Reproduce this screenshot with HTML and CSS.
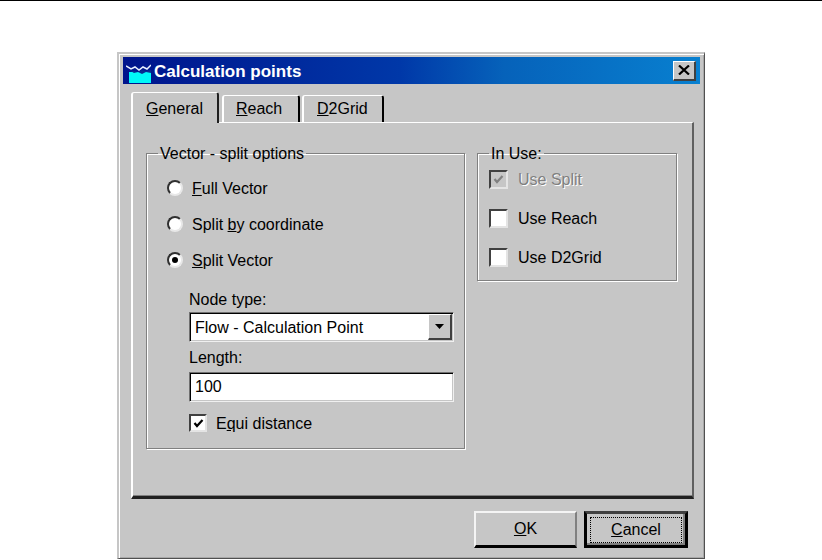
FILE: index.html
```html
<!DOCTYPE html>
<html lang="en">
<head>
<meta charset="utf-8">
<title>Calculation points</title>
<link rel="stylesheet" href="styles.css">
</head>
<body>
<div class="page-rule"></div>
<div class="dialog">
  <div class="titlebar">
    <svg class="app-icon" width="25" height="19" viewBox="0 0 25 19"><rect x="3" y="8" width="22" height="11" fill="#00f8f8"/><path d="M3 6l5 3 4-1 4 2 4-2 5 1v-3l-5 1-4-1-4 2-4-1z" fill="#0a2a90"/><path d="M0 2l5 3 4-2 4 3 4-3 4 2 4-4" fill="none" stroke="#e8f0ff" stroke-width="1.500"/></svg>
    <span class="title-text">Calculation points</span>
    <span class="close-btn"><svg width="12" height="10" viewBox="0 0 12 10"><path d="M1 0.500l10 9M11 0.500l-10 9" stroke="#000" stroke-width="2.200" fill="none"/></svg></span>
  </div>
  <div class="tabs">
    <div class="tab active"><span><u>G</u>eneral</span></div>
    <div class="tab reach"><span><u>R</u>each</span></div>
    <div class="tab grid"><span><u>D</u>2Grid</span></div>
  </div>
  <div class="pane">
    <fieldset class="group vector">
      <legend><span>Vector - split options</span></legend>
      <div class="radio-row"><span class="radio"></span><span class="label"><u>F</u>ull Vector</span></div>
      <div class="radio-row"><span class="radio"></span><span class="label">Split <u>b</u>y coordinate</span></div>
      <div class="radio-row"><span class="radio on"></span><span class="label"><u>S</u>plit Vector</span></div>
      <div class="sub">
        <div class="field-label">Node type:</div>
        <div class="input combo"><span class="val label">Flow - Calculation Point</span><span class="drop"><svg width="9" height="5" viewBox="0 0 9 5"><path d="M0 0h9L4.500 5z" fill="#000"/></svg></span></div>
        <div class="field-label second">Length:</div>
        <div class="input"><span class="val">100</span></div>
        <div class="check-row equi"><span class="check"><svg width="11" height="11" viewBox="0 0 11 11"><path d="M1.500 5l2.500 3 5.500-6" fill="none" stroke="#000" stroke-width="2.200"/></svg></span><span class="label">E<u>q</u>ui distance</span></div>
      </div>
    </fieldset>
    <fieldset class="group inuse">
      <legend><span>In Use:</span></legend>
      <div class="check-row disabled"><span class="check"><svg width="11" height="11" viewBox="0 0 11 11"><path d="M1.500 5l2.500 3 5.500-6" fill="none" stroke="#808080" stroke-width="2.200"/></svg></span><span>Use Split</span></div>
      <div class="check-row"><span class="check"></span><span>Use Reach</span></div>
      <div class="check-row"><span class="check"></span><span>Use D2Grid</span></div>
    </fieldset>
  </div>
  <div class="actions">
    <div class="btn"><span><u>O</u>K</span></div>
    <div class="btn default"><span class="focus"><u>C</u>ancel</span></div>
  </div>
</div>
</body>
</html>
```
FILE: styles.css
```css
* { box-sizing: border-box; }
html, body { margin: 0; padding: 0; background: #fff; }
body {
  width: 822px; height: 560px; overflow: hidden;
  font-family: "Liberation Sans", Arial, sans-serif;
  font-size: 16px; color: #000;
}
.page-rule { height: 1px; background: #000; margin-bottom: 51px; }
.dialog {
  width: 588px; height: 507px; margin-left: 117px;
  background: #c6c6c6;
  border-top: 2px solid #c6c6c6;
  border-left: 2px solid #c6c6c6;
  border-right: 1px solid #505050;
  border-bottom: 1px solid #505050;
  box-shadow: inset 1px 1px 0 #fff, inset -1px -1px 0 #a8a8a8;
  padding: 3px 4px 0 4px;
  display: flex; flex-direction: column;
}
.titlebar {
  height: 27px; flex: none;
  background: linear-gradient(90deg, #00148c 0%, #0038a8 48%, #0662ba 66%, #0880d0 100%);
  display: flex; align-items: flex-end;
  color: #fff; padding-left: 3px; padding-right: 4px;
}
.app-icon { flex: none; margin-bottom: 1px; }
.title-text {
  font-weight: 700; font-size: 17px; margin-left: 3px; flex: 1;
  align-self: center; padding-top: 2px;
}
.close-btn {
  width: 23px; height: 20px; background: #c6c6c6; flex: none;
  align-self: center;
  display: flex; align-items: center; justify-content: center;
  border-top: 1px solid #fff; border-left: 1px solid #fff;
  border-right: 2px solid #404040; border-bottom: 2px solid #404040;
}
.tabs {
  display: flex; height: 39px; flex: none; padding-left: 8px; align-items: flex-end;
  position: relative; z-index: 1; margin-bottom: -1px;
}
.tab {
  height: 27px; width: 78px; padding: 4px 0 0 12px; margin-bottom: 1px; margin-right: 2px;
  line-height: 18px;
  border-top: 1px solid #fff; border-left: 2px solid #fff;
  border-right: 2px solid #000;
  border-radius: 3px 3px 0 0;
  background: #c6c6c6;
}
.tab.active {
  height: 31px; width: 88px; padding: 7px 0 0 13px; margin-bottom: 0; margin-right: 3px;
  border-right-color: #202020;
}
.tab.grid { width: 82px; padding-left: 13px; }
.pane {
  margin-left: 8px; width: 563px; height: 377px; flex: none;
  border-top: 1px solid #fff; border-left: 2px solid #fff;
  border-right: 2px solid #606060; border-bottom: 3px solid #202020;
  box-shadow: inset 0 -1px 0 #808080;
  display: flex; gap: 12px; align-items: flex-start;
  padding: 22px 0 0 13px;
}
.group {
  margin: 0; padding: 0; min-width: 0;
  border: 1px solid #808080;
  box-shadow: 1px 1px 0 #fff, inset 1px 1px 0 #fff;
}
.group legend { padding: 0; height: 16px; line-height: 18px; }
.group legend span { padding: 0 2px; }
.vector legend { margin-left: -9px; }
.inuse legend { margin-left: 0; }
.vector { width: 319px; height: 304px; padding: 9px 0 0 20px; }
.inuse { width: 200px; height: 136px; padding: 9px 0 0 11px; display: flex; flex-direction: column; gap: 20px; }
.radio-row { height: 36px; display: flex; align-items: center; gap: 9px; }
.label { padding-top: 2px; }
.radio {
  width: 16px; height: 16px; border-radius: 50%; background: #fff;
  border: 2px solid #303030; border-right-color: #e8e8e8; border-bottom-color: #e8e8e8;
  position: relative; flex: none;
}
.radio.on::after {
  content: ""; position: absolute; left: 3px; top: 3px;
  width: 6px; height: 6px; border-radius: 50%; background: #000;
}
.sub { padding-left: 22px; margin-top: 12px; }
.field-label { height: 22px; line-height: 20px; }
.field-label.second { margin-top: 6px; height: 24px; }
.input {
  width: 265px; height: 30px; background: #fff;
  border-top: 1px solid #707070; border-left: 1px solid #707070;
  border-right: 1px solid #f0f0f0; border-bottom: 1px solid #f0f0f0;
  box-shadow: inset 1px 1px 0 #000, inset -1px -1px 0 #c6c6c6;
  display: flex; align-items: center; padding-left: 5px;
}
.input .val { flex: 1; }
.combo { padding-right: 1px; }
.drop {
  width: 24px; height: 26px; background: #c6c6c6; flex: none;
  border-top: 1px solid #fff; border-left: 1px solid #fff;
  border-right: 2px solid #404040; border-bottom: 2px solid #404040;
  display: flex; align-items: center; justify-content: center;
}
.check-row { height: 19px; display: flex; align-items: center; gap: 10px; }
.check {
  width: 19px; height: 19px; background: #fff; flex: none;
  border-top: 2px solid #404040; border-left: 2px solid #404040;
  border-right: 2px solid #e4e4e4; border-bottom: 2px solid #e4e4e4;
  display: flex; align-items: center; justify-content: center;
}
.equi { height: 38px; margin-top: 2px; gap: 9px; }
.equi .check { width: 18px; height: 18px; }
.disabled { color: #808080; text-shadow: 1px 1px 0 #fff; }
.disabled .check { background: #c6c6c6; }
.actions { display: flex; justify-content: flex-end; gap: 7px; padding: 12px 12px 0 0; }
.btn {
  width: 103px; height: 37px;
  background: #c6c6c6;
  border-top: 2px solid #f4f4f4; border-left: 2px solid #f4f4f4;
  border-right: 2px solid #808080; border-bottom: 3px solid #000;
  display: flex; align-items: center; justify-content: center;
}
.btn.default {
  width: 104px;
  border: 3px solid #000;
  border-top-color: #404040;
  box-shadow: inset -2px -2px 0 #808080;
}
.focus {
  width: 92px; height: 26px; border: 1px dotted #000;
  display: flex; align-items: center; justify-content: center;
}
```
